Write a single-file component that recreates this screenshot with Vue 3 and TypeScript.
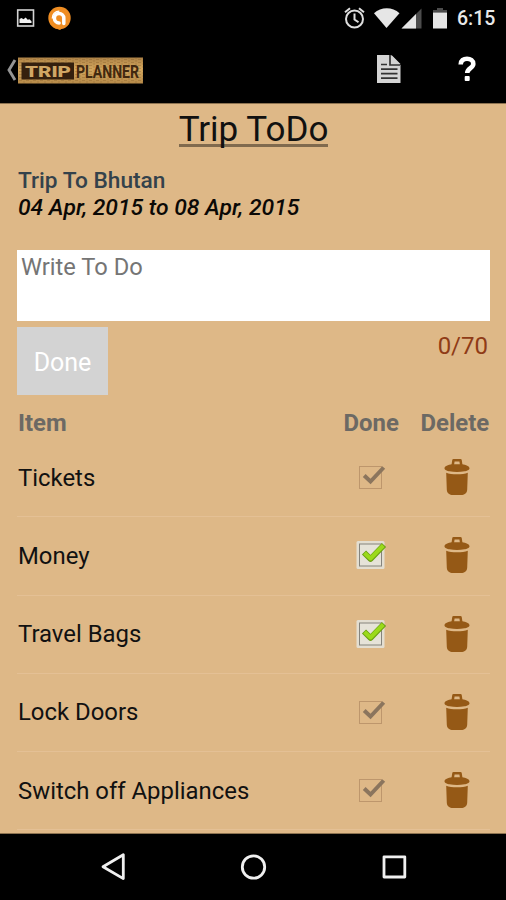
<script setup lang="ts">
import { ref } from 'vue'

interface TodoItem {
  label: string
  done: boolean
}

const draft = ref('')
const maxLength = 70
const items = ref<TodoItem[]>([
  { label: 'Tickets', done: false },
  { label: 'Money', done: true },
  { label: 'Travel Bags', done: true },
  { label: 'Lock Doors', done: false },
  { label: 'Switch off Appliances', done: false },
])

function toggle(item: TodoItem) {
  item.done = !item.done
}

function remove(index: number) {
  items.value.splice(index, 1)
}

function add() {
  if (!draft.value.trim()) return
  items.value.push({ label: draft.value.trim(), done: false })
  draft.value = ''
}
</script>

<template>
  <div class="screen">
    <header class="status-bar">
      <svg class="status-left" width="60" height="37" viewBox="0 0 60 37">
        <rect x="2.700" y="10" width="15.800" height="16" fill="none" stroke="#d4d4d4" stroke-width="1.600" />
        <path d="M4.500 23V19l2-1 2 1.300 2.200-1.800 2 2.300 1.800-.5 2 2V23z" fill="#f2f2f2" />
        <circle cx="44.500" cy="18" r="11.200" fill="#ef8d22" />
        <path d="M38.500 27.400l6.500 2.600 3-2.500z" fill="#ef8d22" />
        <path d="M48.800 23.500V18a4.700 4.700 0 1 0-4.700 4.900" fill="none" stroke="#fff" stroke-width="3.500" stroke-linecap="round" />
        <path d="M37.300 18.500a7 7 0 0 1 7-7.400" fill="none" stroke="#fff" stroke-width="1.400" />
      </svg>
      <svg class="status-icons" width="108" height="37" viewBox="0 0 108 37">
        <g fill="none" stroke="#dedede" stroke-width="2">
          <circle cx="14.500" cy="19" r="8.500" />
          <path d="M14.500 13.500v6l4 2.800M5 12.300l5-4M24 12.300l-5-4" />
        </g>
        <path d="M34 13.200C41 6.500 52.500 6.500 59.500 13.200L46.500 28z" fill="#e6e6e6" />
        <path d="M81.500 8.500V28.500H61.500z" fill="#4c4c4c" />
        <path d="M76 14V28.500H61.500z" fill="#e6e6e6" />
        <path d="M93 12.500V10h4V8h6v2h4v2.500z" fill="#4c4c4c" />
        <path d="M93 12.500h14v16H93z" fill="#e6e6e6" />
      </svg>
      <span class="clock">6:15</span>
    </header>

    <nav class="app-bar">
      <svg class="brand" width="170" height="36" viewBox="0 0 170 36">
        <defs>
          <linearGradient id="wood" x1="0" y1="0" x2="0" y2="1">
            <stop offset="0" stop-color="#ad8246" />
            <stop offset=".45" stop-color="#d4a75e" />
            <stop offset="1" stop-color="#b68a49" />
          </linearGradient>
          <pattern id="grain" width="7" height="3" patternUnits="userSpaceOnUse">
            <path d="M0 .5h3M4 2h2" stroke="#77501f" stroke-width=".6" opacity=".5" />
          </pattern>
        </defs>
        <path d="M10 7L4 17 10 27" fill="none" stroke="#949494" stroke-width="2.900" />
        <rect x="13" y="4.500" width="125" height="26" fill="url(#wood)" />
        <rect x="13" y="4.500" width="125" height="26" fill="url(#grain)" />
        <rect x="16.500" y="9.500" width="52.500" height="17" fill="#35200e" />
        <text x="20" y="24" class="logo-trip" textLength="46" lengthAdjust="spacingAndGlyphs">TRIP</text>
        <text x="71" y="24.500" class="logo-planner" textLength="63" lengthAdjust="spacingAndGlyphs">PLANNER</text>
      </svg>
      <span class="bar-space"></span>
      <svg class="note" width="26" height="30" viewBox="0 0 26 30">
        <path d="M1 1h14l9.500 10v18H1z" fill="#d5d5d5" />
        <path d="M14 1v10h10" fill="none" stroke="#333" stroke-width="1.700" />
        <path d="M15.500 1l9 9h-9z" fill="#d5d5d5" />
        <path d="M5 10.500h6M5 15.200h16.500M5 19.700h16.500M5 24.200h16.500" stroke="#333" stroke-width="1.700" />
      </svg>
      <svg class="help" width="18" height="26" viewBox="0 0 18 26">
        <path d="M2.700 8.500C2.700 4.500 5.500 2.800 9 2.800s6.300 2 6.300 5.100c0 4.200-6.100 4.300-6.100 9.200" fill="none" stroke="#fff" stroke-width="4.600" />
        <rect x="6.700" y="20" width="5" height="5" rx="1" fill="#fff" />
      </svg>
    </nav>

    <main class="content">
      <h1 class="title"><span>Trip ToDo</span></h1>
      <div class="trip-name">Trip To Bhutan</div>
      <div class="trip-dates">04 Apr, 2015 to 08 Apr, 2015</div>

      <textarea v-model="draft" class="entry" placeholder="Write To Do" :maxlength="maxLength"></textarea>
      <div class="entry-actions">
        <button class="submit" type="button" @click="add">Done</button>
        <span class="counter">{{ draft.length }}/{{ maxLength }}</span>
      </div>

      <div class="columns">
        <span class="col-item">Item</span>
        <span class="col-done">Done</span>
        <span class="col-delete">Delete</span>
      </div>

      <ul class="list">
        <li v-for="(item, index) in items" :key="item.label" class="row">
          <span class="label">{{ item.label }}</span>
          <svg class="check" width="34" height="34" viewBox="0 0 34 34" @click="toggle(item)">
            <template v-if="item.done">
              <rect x="2.500" y="3" width="28" height="28" rx="1.500" fill="#e3ded1" />
              <rect x="5.500" y="6" width="22" height="22" fill="#e6e3d8" stroke="#85847d" />
              <path d="M10 14.500l6.500 6.500L30 7" fill="none" stroke="#699f12" stroke-width="5.800" stroke-linejoin="round" />
              <path d="M10.500 15l6 5.500L29.300 7.500" fill="none" stroke="#9bda1b" stroke-width="4" stroke-linejoin="round" />
            </template>
            <template v-else>
              <rect x="5.500" y="6.500" width="22" height="22" fill="none" stroke="#bd966c" />
              <path d="M10.200 15.500l6.300 6L29.700 7.500" fill="none" stroke="#8b755d" stroke-width="4" />
            </template>
          </svg>
          <svg class="trash" width="26" height="38" viewBox="0 0 26 38" @click="remove(index)">
            <path d="M8.700 7.500l.8-5.200h7l.8 5.200" fill="none" stroke="#955916" stroke-width="2.500" stroke-linejoin="round" />
            <path d="M.5 10.500C.5 8 4 7 8 6.300h10c4 .7 7.500 1.700 7.500 4.200 0 1.500-3 2.500-5 2.800-5 .9-10 .9-15 0C3.500 13 .5 12 .5 10.500z" fill="#955916" />
            <path d="M2.200 14.800c5 2 16.600 2 21.600 0l-.6 17c-.2 3.700-3 5.200-6 5.200H8.800c-3 0-5.800-1.500-6-5.200z" fill="#955916" />
          </svg>
        </li>
      </ul>
    </main>

    <footer class="nav-bar">
      <svg width="506" height="67" viewBox="0 0 506 67">
        <g fill="none" stroke="#f0f0f0" stroke-width="2.800" stroke-linejoin="round">
          <path d="M123.300 20.800v23.800L103 32.800z" />
          <circle cx="253.500" cy="33" r="11.200" />
          <rect x="384" y="22.800" width="20.800" height="20.200" />
        </g>
      </svg>
    </footer>
  </div>
</template>

<style>
body {
  margin: 0;
  background: #000;
}
</style>

<style scoped>
.screen {
  display: flex;
  flex-direction: column;
  width: 506px;
  height: 900px;
  overflow: hidden;
  background: #000;
  font-family: Roboto, "Liberation Sans", sans-serif;
  color: #111;
}

.status-bar {
  display: flex;
  flex: 0 0 37px;
  padding: 0 8px 0 15px;
  color: #e8e8e8;
}

.status-icons {
  margin-left: auto;
}

.clock {
  width: 50px;
  box-sizing: border-box;
  padding-left: 9px;
  font-size: 19.5px;
  font-weight: 500;
  line-height: 38px;
  white-space: nowrap;
}

.app-bar {
  display: flex;
  flex: 0 0 65px;
  align-items: center;
  padding: 0 30px 0 5px;
}

.bar-space {
  flex: 1;
}

.note {
  margin: 0 56px 3px 0;
}

.help {
  margin-bottom: 3px;
}

.logo-trip {
  fill: #d1a765;
  font: 900 15.5px Roboto, sans-serif;
}

.logo-planner {
  fill: #41280f;
  font: 700 17.5px Roboto, sans-serif;
}

.content {
  display: flex;
  flex: 0 0 731px;
  flex-direction: column;
  box-sizing: border-box;
  height: 731px;
  padding: 6px 16px 0 17px;
  overflow: hidden;
  background: #deb887;
  border-top: 1px solid #8c7250;
  border-bottom: 1px solid #8c7250;
}

.title {
  display: flex;
  flex: none;
  justify-content: center;
  height: 58px;
  margin: 0;
  font-size: 35px;
  font-weight: 400;
  line-height: 39px;
}

.title span {
  height: 37px;
  box-sizing: border-box;
  border-bottom: 3px solid #806a4e;
  white-space: nowrap;
}

.trip-name {
  flex: none;
  height: 26px;
  padding-left: 1px;
  color: #34424b;
  font-size: 22.7px;
  font-weight: 500;
  line-height: 26px;
}

.trip-dates {
  flex: none;
  height: 56px;
  padding-left: 1px;
  color: #0b0906;
  font-size: 22.9px;
  font-style: italic;
  font-weight: 500;
  line-height: 28px;
}

.entry {
  flex: 0 0 71px;
  width: 473px;
  height: 71px;
  box-sizing: border-box;
  padding: 3px 4px;
  border: 0;
  background: #fff;
  color: #333;
  font: 400 23.7px/29px Roboto, sans-serif;
  outline: 0;
  resize: none;
}

.entry::placeholder {
  color: #757575;
  opacity: 1;
}

.entry-actions {
  display: flex;
  flex: 0 0 74px;
  justify-content: space-between;
  align-items: flex-start;
  padding-top: 6px;
  box-sizing: border-box;
}

.submit {
  width: 91px;
  height: 68px;
  padding: 3px 0 0;
  border: 0;
  background: #d3d3d3;
  color: #fff;
  font: 400 25px Roboto, sans-serif;
}

.counter {
  margin-right: 2px;
  color: #8f3b16;
  font-size: 24px;
  line-height: 38px;
}

.columns {
  display: flex;
  flex: none;
  padding: 13px 0 0 1px;
  color: #6c6964;
  font-size: 23.9px;
  font-weight: 700;
  line-height: 31px;
}

.col-item {
  width: 325.5px;
}

.col-done {
  width: 77px;
}

.list {
  flex: none;
  margin: 0;
  padding: 0;
  list-style: none;
}

.row {
  display: flex;
  align-items: center;
  box-sizing: border-box;
  height: 78.25px;
  padding: 0 20px 0 1px;
  border-bottom: 1px solid #e4c095;
}

.label {
  flex: 1;
  font-size: 23.9px;
}

.check {
  margin: 0 56px 1px 0;
}

.trash {
  margin-bottom: 1px;
}

.nav-bar {
  flex: 0 0 67px;
}
</style>
